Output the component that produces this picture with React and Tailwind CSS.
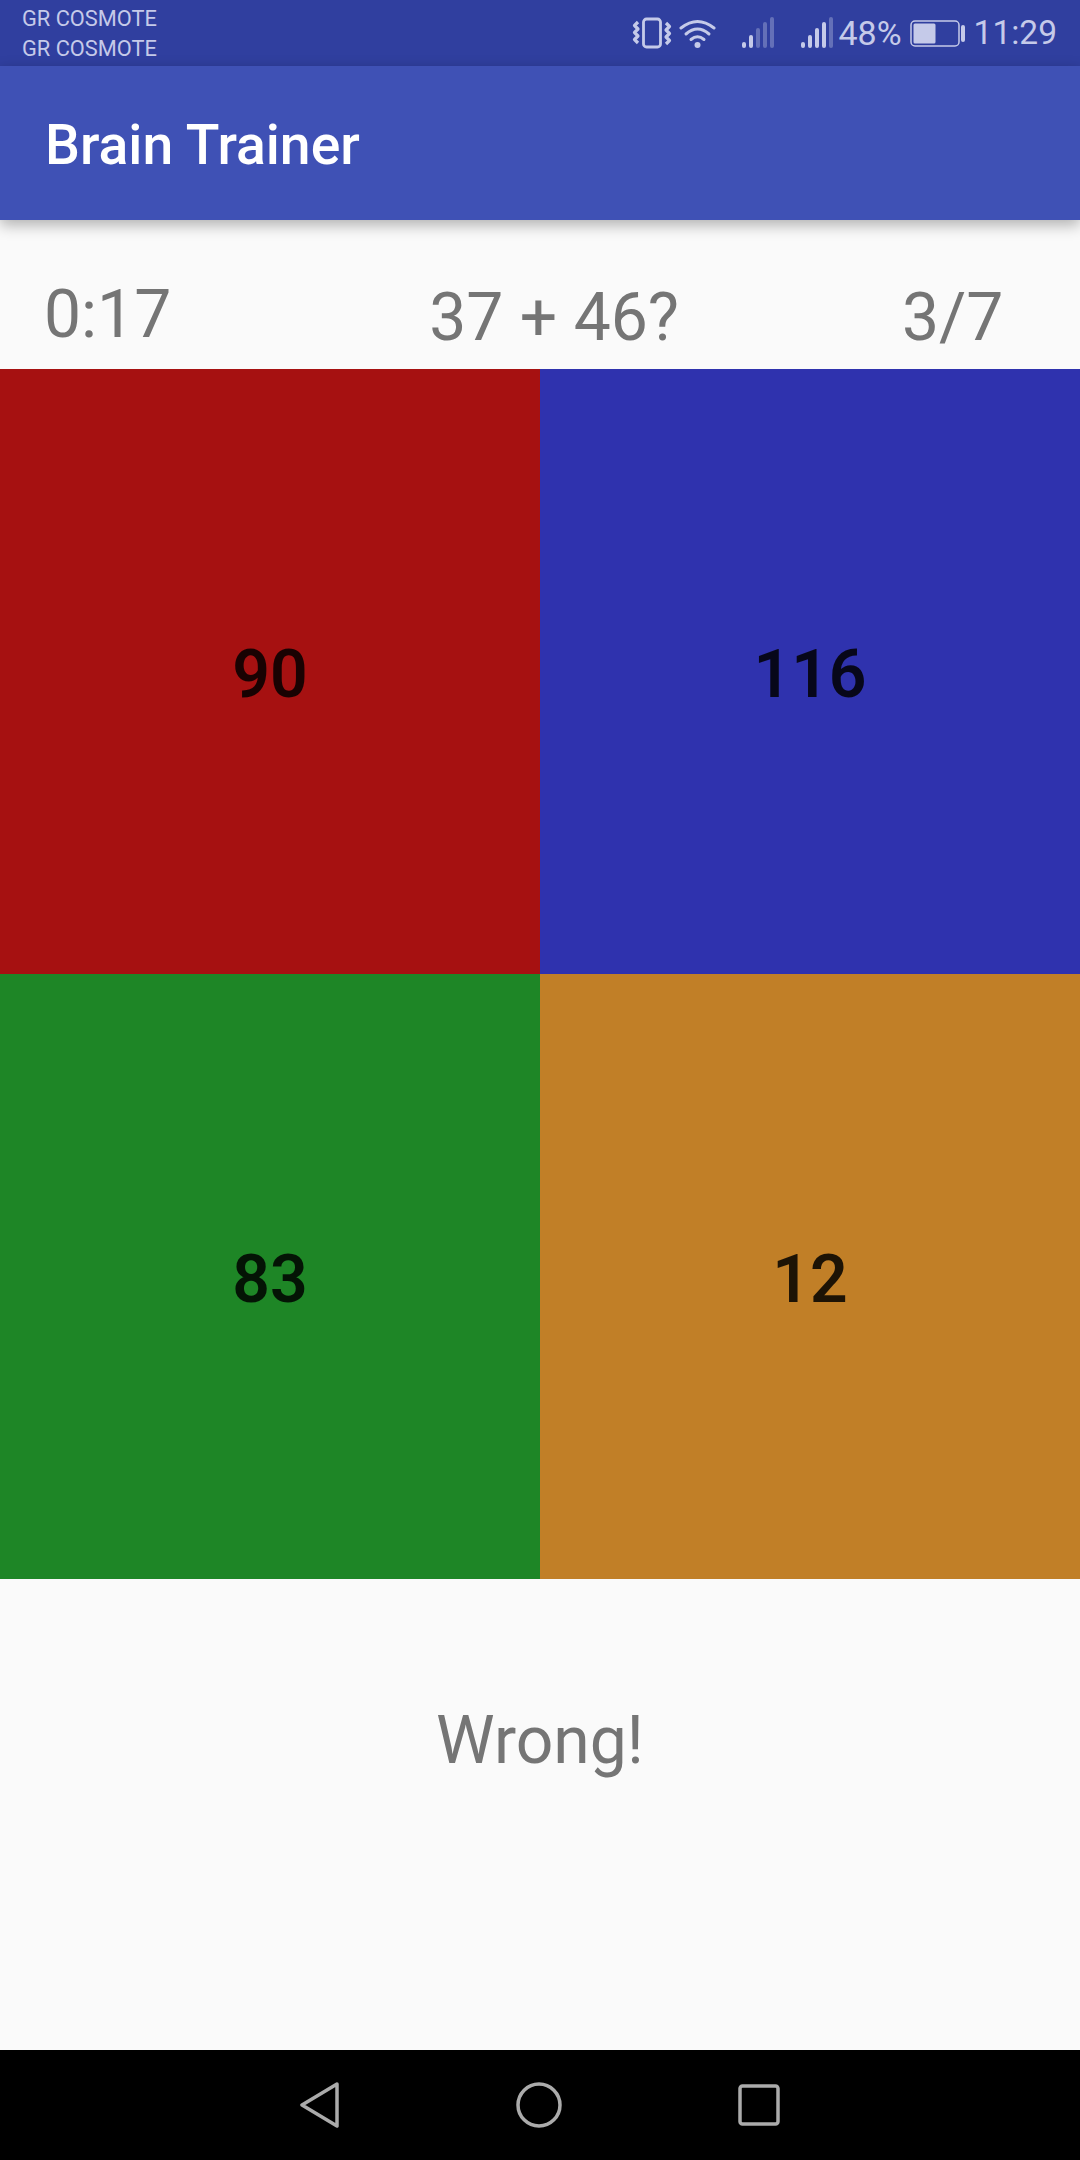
import React from "react";

const ANSWERS = [
  { value: 90, bg: "bg-[#a61111]" },
  { value: 116, bg: "bg-[#2f32ae]" },
  { value: 83, bg: "bg-[#1e8626]" },
  { value: 12, bg: "bg-[#c17f27]" },
];

function VibrateIcon() {
  return (
    <svg width="40" height="32" viewBox="0 0 40 32" fill="none" stroke="currentColor">
      <rect x="11.5" y="2" width="17" height="28" rx="3" strokeWidth="2.8" />
      <path d="M6 5 L2.5 8.5 L6 12 L2.5 15.5 L6 19 L2.5 22.5 L6 26" strokeWidth="3.2" strokeLinejoin="round" />
      <path d="M34 6 L37.5 9.5 L34 13 L37.5 16.5 L34 20 L37.5 23.5 L34 27" strokeWidth="3.2" strokeLinejoin="round" />
    </svg>
  );
}

function WifiIcon() {
  return (
    <svg width="37" height="30" viewBox="0 0 37 30" fill="none" stroke="currentColor" strokeWidth="3" strokeLinecap="round">
      <path d="M2 10 Q18.5 -3 35 10" />
      <path d="M7 16 Q18.5 6 30 16" />
      <path d="M12 21.5 Q18.5 16 25 21.5" />
      <circle cx="18.5" cy="27" r="3" fill="currentColor" stroke="none" />
    </svg>
  );
}

function SignalIcon({ active }) {
  const bars = [
    { x: 0, h: 6 },
    { x: 7, h: 13 },
    { x: 14, h: 20 },
    { x: 21, h: 26 },
    { x: 28, h: 31 },
  ];
  return (
    <svg width="32" height="32" viewBox="0 0 32 32" fill="currentColor">
      {bars.map((b, i) => (
        <rect key={b.x} x={b.x} y={31 - b.h} width="4" height={b.h} rx="2" opacity={i < active ? 1 : 0.35} />
      ))}
    </svg>
  );
}

function BatteryIcon() {
  return (
    <svg width="56" height="27" viewBox="0 0 56 27" fill="none">
      <rect x="1" y="1" width="48" height="25" rx="4" stroke="currentColor" strokeWidth="1.5" />
      <rect x="3.5" y="3.5" width="22" height="20" rx="1.5" fill="currentColor" />
      <rect x="51" y="5" width="4" height="17" rx="2" fill="currentColor" />
    </svg>
  );
}

function StatusBar() {
  return (
    <div className="flex h-[66px] shrink-0 items-center justify-between bg-[#303f9f] pl-[22px] pr-[23px] text-[#c5cae9]">
      <div className="flex flex-col pt-[2px] text-[21.8px] leading-[30px]">
        <span>GR COSMOTE</span>
        <span>GR COSMOTE</span>
      </div>
      <div className="flex items-center">
        <VibrateIcon />
        <div className="ml-[7px]">
          <WifiIcon />
        </div>
        <div className="ml-[26px]">
          <SignalIcon active={2} />
        </div>
        <div className="ml-[27px]">
          <SignalIcon active={4} />
        </div>
        <span className="ml-[5px] text-[34px] leading-none">48%</span>
        <div className="ml-[8px]">
          <BatteryIcon />
        </div>
        <span className="ml-[8px] text-[33.5px] leading-none">11:29</span>
      </div>
    </div>
  );
}

function NavBar() {
  return (
    <div className="flex h-[110px] shrink-0 items-start justify-center gap-[176px] bg-black pt-[32px] text-[#ababab]">
      <svg width="40" height="46" viewBox="0 0 40 46" fill="none" stroke="currentColor" strokeWidth="3.5" strokeLinejoin="round">
        <path d="M37 2 L2 23 L37 44 Z" />
      </svg>
      <svg width="46" height="46" viewBox="0 0 46 46" fill="none" stroke="currentColor" strokeWidth="3.5">
        <circle cx="23" cy="23" r="21" />
      </svg>
      <svg className="mt-[2px]" width="42" height="42" viewBox="0 0 42 42" fill="none" stroke="currentColor" strokeWidth="3.5">
        <rect x="2" y="2" width="38" height="38" rx="2.5" />
      </svg>
    </div>
  );
}

export default function App() {
  return (
    <div className="flex h-[2160px] w-[1080px] flex-col overflow-hidden bg-[#fafafa] font-['Roboto',sans-serif]">
      <StatusBar />
      <div className="relative z-10 flex h-[154px] shrink-0 items-center bg-[#3f51b5] pl-[45px] pt-[5px] shadow-[0_5px_14px_rgba(0,0,0,0.3)]">
        <h1 className="text-[55.3px] font-medium leading-none text-white">Brain Trainer</h1>
      </div>

      <div className="flex h-[149px] shrink-0 text-[66px] leading-none text-[#757575]">
        <span className="ml-[44px] mt-[62px]">0:17</span>
        <span className="ml-[258px] mt-[65px]">37 + 46?</span>
        <span className="ml-[223px] mt-[65px]">3/7</span>
      </div>

      <div className="grid h-[1210px] shrink-0 grid-cols-2 grid-rows-2">
        {ANSWERS.map((a) => (
          <div key={a.value} className={`flex items-center justify-center pt-[6px] ${a.bg}`}>
            <span className="text-[66px] font-semibold leading-none text-black/85">{a.value}</span>
          </div>
        ))}
      </div>

      <div className="flex flex-1 items-center justify-center pb-[148px]">
        <span className="text-[66px] leading-none text-[#757575]">Wrong!</span>
      </div>

      <NavBar />
    </div>
  );
}
